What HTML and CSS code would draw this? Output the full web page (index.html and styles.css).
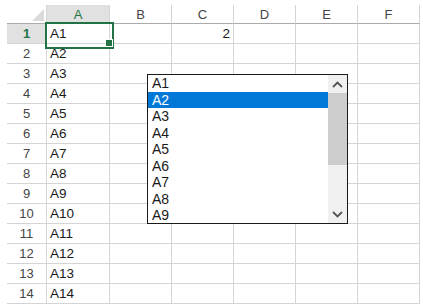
FILE: index.html
```html
<!DOCTYPE html>
<html lang="en">
<head>
    <meta charset="utf-8">
    <link rel="stylesheet" href="styles.css">
</head>
<body>
<div class="sheet">
    <div class="grid">
        <div class="hd corner">
            <svg class="tri" width="12" height="12" viewBox="0 0 12 12"><polygon points="12,0 12,12 0,12" fill="#dadada"/></svg>
        </div>
        <div class="hd col sel">A</div>
        <div class="hd col">B</div>
        <div class="hd col">C</div>
        <div class="hd col">D</div>
        <div class="hd col">E</div>
        <div class="hd col">F</div>

        <div class="hd row sel">1</div>
        <div class="cell active">A1</div><div class="cell"></div><div class="cell num">2</div><div class="cell"></div><div class="cell"></div><div class="cell"></div>
        <div class="hd row">2</div>
        <div class="cell">A2</div><div class="cell"></div><div class="cell"></div><div class="cell"></div><div class="cell"></div><div class="cell"></div>
        <div class="hd row">3</div>
        <div class="cell">A3</div><div class="cell"></div><div class="cell"></div><div class="cell"></div><div class="cell"></div><div class="cell"></div>
        <div class="hd row">4</div>
        <div class="cell">A4</div><div class="cell"></div><div class="cell"></div><div class="cell"></div><div class="cell"></div><div class="cell"></div>
        <div class="hd row">5</div>
        <div class="cell">A5</div><div class="cell"></div><div class="cell"></div><div class="cell"></div><div class="cell"></div><div class="cell"></div>
        <div class="hd row">6</div>
        <div class="cell">A6</div><div class="cell"></div><div class="cell"></div><div class="cell"></div><div class="cell"></div><div class="cell"></div>
        <div class="hd row">7</div>
        <div class="cell">A7</div><div class="cell"></div><div class="cell"></div><div class="cell"></div><div class="cell"></div><div class="cell"></div>
        <div class="hd row">8</div>
        <div class="cell">A8</div><div class="cell"></div><div class="cell"></div><div class="cell"></div><div class="cell"></div><div class="cell"></div>
        <div class="hd row">9</div>
        <div class="cell">A9</div><div class="cell"></div><div class="cell"></div><div class="cell"></div><div class="cell"></div><div class="cell"></div>
        <div class="hd row">10</div>
        <div class="cell">A10</div><div class="cell"></div><div class="cell"></div><div class="cell"></div><div class="cell"></div><div class="cell"></div>
        <div class="hd row">11</div>
        <div class="cell">A11</div><div class="cell"></div><div class="cell"></div><div class="cell"></div><div class="cell"></div><div class="cell"></div>
        <div class="hd row">12</div>
        <div class="cell">A12</div><div class="cell"></div><div class="cell"></div><div class="cell"></div><div class="cell"></div><div class="cell"></div>
        <div class="hd row">13</div>
        <div class="cell">A13</div><div class="cell"></div><div class="cell"></div><div class="cell"></div><div class="cell"></div><div class="cell"></div>
        <div class="hd row">14</div>
        <div class="cell">A14</div><div class="cell"></div><div class="cell"></div><div class="cell"></div><div class="cell"></div><div class="cell"></div>
    </div>

    <div class="listbox">
        <ul class="items">
            <li>A1</li>
            <li class="current">A2</li>
            <li>A3</li>
            <li>A4</li>
            <li>A5</li>
            <li>A6</li>
            <li>A7</li>
            <li>A8</li>
            <li>A9</li>
        </ul>
        <div class="scroll">
            <div class="btn">
                <svg width="11" height="7" viewBox="0 0 11 7"><polyline points="1,6 5.5,1.5 10,6" fill="none" stroke="#555" stroke-width="1.8"/></svg>
            </div>
            <div class="thumb"></div>
            <div class="track"></div>
            <div class="btn">
                <svg width="11" height="7" viewBox="0 0 11 7"><polyline points="1,1 5.5,5.5 10,1" fill="none" stroke="#555" stroke-width="1.8"/></svg>
            </div>
        </div>
    </div>
</div>
</body>
</html>
```

FILE: styles.css
```css
* {
    margin: 0;
    padding: 0;
    box-sizing: border-box;
}

ul {
    list-style: none;
}

body {
    width: 423px;
    height: 307px;
    overflow: hidden;
    background-color: #fff;
    font-family: "Liberation Sans", Arial, sans-serif;
}

.sheet {
    position: relative;
    height: 307px;
    padding: 5px 0 0 7px;
}

.grid {
    display: grid;
    grid-template-columns: 40px 63px 62px 62px 62px 62px 62px;
    grid-template-rows: 19px;
    grid-auto-rows: 20px;
}

.hd {
    color: #444;
    font-size: 13px;
    line-height: 19px;
    text-align: center;
    border-right: 1px solid #d4d4d4;
    border-bottom: 1px solid #d4d4d4;
}

.corner {
    position: relative;
    border-bottom-color: #ababab;
}

.corner .tri {
    position: absolute;
    right: 2px;
    bottom: 2px;
}

.col {
    border-bottom-color: #ababab;
}

.hd.sel {
    background-color: #e1e1e1;
    color: #217346;
    font-weight: bold;
}

.col.sel {
    font-weight: normal;
    border-bottom: 1px solid #217346;
}

.cell {
    color: #1a1a1a;
    font-size: 13.5px;
    line-height: 19px;
    padding-left: 3px;
    border-right: 1px solid #d4d4d4;
    border-bottom: 1px solid #d4d4d4;
}

.cell.num {
    text-align: right;
    padding-right: 3px;
}

.cell.active {
    position: relative;
}

.cell.active::before {
    content: "";
    position: absolute;
    left: -2px;
    top: -2px;
    width: 65px;
    height: 23px;
    border: 2px solid #217346;
}

.cell.active::after {
    content: "";
    position: absolute;
    right: -4px;
    bottom: -4px;
    width: 6px;
    height: 6px;
    background-color: #217346;
    border: 1px solid #fff;
}

.listbox {
    position: absolute;
    left: 147px;
    top: 74px;
    width: 201px;
    height: 150px;
    border: 1px solid #1a1a1a;
    background-color: #fff;
    display: flex;
    overflow: hidden;
}

.items {
    flex: 1;
}

.items li {
    height: 16.5px;
    line-height: 16.5px;
    padding-left: 4px;
    font-size: 14px;
    color: #1a1a1a;
}

.items li.current {
    background-color: #0078d7;
    color: #fff;
}

.scroll {
    width: 19px;
    display: flex;
    flex-direction: column;
    background-color: #f0f0f0;
}

.btn {
    height: 18px;
    display: flex;
    align-items: center;
    justify-content: center;
}

.thumb {
    height: 72px;
    background-color: #cdcdcd;
}

.track {
    flex: 1;
}
```
